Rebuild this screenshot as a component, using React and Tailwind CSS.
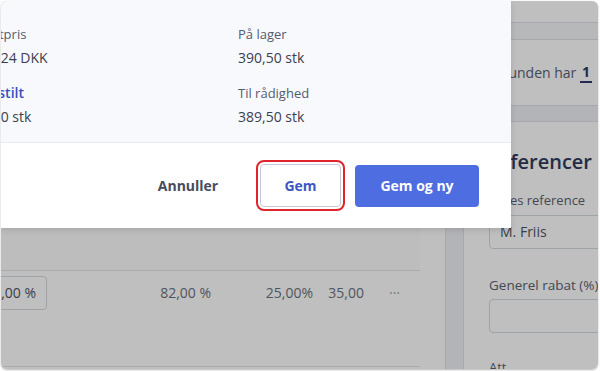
export default function App() {
  return (
    <div className="w-[600px] h-[371px] bg-white pt-[1px] pl-[1px] font-['Open_Sans',sans-serif]">
      <div className="relative w-[597px] h-[368px] overflow-hidden rounded-[6px] bg-[#eff0f4] shadow-[0_1px_2px_rgba(0,0,0,0.3)]">
        {/* Page behind the dialog */}
        <div className="h-[22px] bg-white border-b border-[#dfe1e7]"></div>
        <div className="h-[17px] bg-[#f5f6f8] border-b border-[#dfe1e7]"></div>
        <div className="h-[66px] bg-white border-b border-[#dfe1e7] flex items-center justify-end pr-[6px] text-[14px] text-[#5b6172]">
          <span>Kunden har&nbsp;</span>
          <span className="font-bold text-[#2f3a6b] border-b-2 border-[#2f3a6b] px-[2px] leading-[18px]">1</span>
        </div>
        <div className="mt-[15px] flex gap-[17px] w-[640px]">
          {/* Main card */}
          <div className="w-[446px] ml-[-1px] shrink-0 bg-white border border-[#dfe1e7] pr-[25px] h-[300px]">
            <div className="h-[149px] bg-[#fcfcfd] border-b border-[#e3e5ea]"></div>
            <div className="h-[96px] border-b border-[#e3e5ea] flex items-start pt-[5px] text-[14px] text-[#6b7280]">
              <div className="w-[46px] shrink-0">
                <div className="w-[76px] ml-[-30px] h-[34px] border border-[#d5d8df] rounded-[4px] text-right pr-[10px] leading-[32px] text-[#4b5563]">
                  10,00 %
                </div>
              </div>
              <div className="w-[164px] shrink-0 text-right leading-[34px]">82,00 %</div>
              <div className="w-[102px] shrink-0 text-right leading-[34px]">25,00%</div>
              <div className="w-[51px] shrink-0 text-right leading-[34px]">35,00</div>
              <div className="pl-[25px] leading-[34px] text-[#9ca3af]">···</div>
            </div>
          </div>
          {/* Right card */}
          <div className="w-[178px] shrink-0 bg-white border border-[#dfe1e7] pt-[26px] pl-[25px] h-[300px]">
            <h2 className="ml-[-3px] text-[20px] leading-7 font-semibold text-[#323a5c]">Referencer</h2>
            <p className="mt-[14px] text-[13px] leading-5 text-[#5b6172]">Vores reference</p>
            <div className="mt-[5px] h-[34px] border border-[#d5d8df] rounded-[4px] pl-[10px] leading-[32px] text-[14px] text-[#4b5563]">
              M. Friis
            </div>
            <p className="mt-[26px] text-[13.5px] leading-5 text-[#5b6172] whitespace-nowrap">Generel rabat (%)</p>
            <div className="mt-[4px] h-[34px] border border-[#d5d8df] rounded-[4px]"></div>
            <p className="mt-[24px] text-[13px] leading-5 text-[#5b6172]">Att</p>
          </div>
        </div>

        {/* Overlay */}
        <div className="absolute inset-0 bg-black/25"></div>

        {/* Dialog */}
        <div className="absolute top-0 left-0 w-[510px] shadow-[0_2px_6px_rgba(0,0,0,0.12)]">
          <div className="bg-[#f8f9fd] pt-[23px] pb-[15px]">
            <div className="ml-[-20px] grid grid-cols-[257px_1fr]">
              <div>
                <p className="ml-[-4px] text-[13px] leading-5 text-[#555b6b]">Kostpris</p>
                <p className="mt-[4px] text-[14px] leading-5 text-[#3a4050]">18,24 DKK</p>
                <p className="mt-[15px] text-[14px] leading-5 font-semibold text-[#3451c2]">Bestilt</p>
                <p className="mt-[4px] text-[14px] leading-5 text-[#3a4050]">0,00 stk</p>
              </div>
              <div>
                <p className="text-[13px] leading-5 text-[#555b6b]">På lager</p>
                <p className="mt-[4px] text-[14px] leading-5 text-[#3a4050]">390,50 stk</p>
                <p className="mt-[15px] text-[13px] leading-5 text-[#555b6b]">Til rådighed</p>
                <p className="mt-[4px] text-[14px] leading-5 text-[#3a4050]">389,50 stk</p>
              </div>
            </div>
          </div>
          <div className="h-[86px] bg-white border-t border-[#e8eaf2] flex items-center justify-end gap-[14px] pr-[32px]">
            <button className="w-[116px] h-[42px] text-[14px] font-bold text-[#474c5c]">Annuller</button>
            <button className="w-[81px] h-[43px] bg-white border border-[#c5cad6] rounded-[4px] text-[14px] font-bold text-[#3d56c6] outline-[2.5px] outline-solid outline-[#e0242b] outline-offset-[2px]">
              Gem
            </button>
            <button className="w-[124px] h-[42px] bg-[#4d6de0] rounded-[4px] text-[14px] font-bold text-white">
              Gem og ny
            </button>
          </div>
        </div>
      </div>
    </div>
  );
}
